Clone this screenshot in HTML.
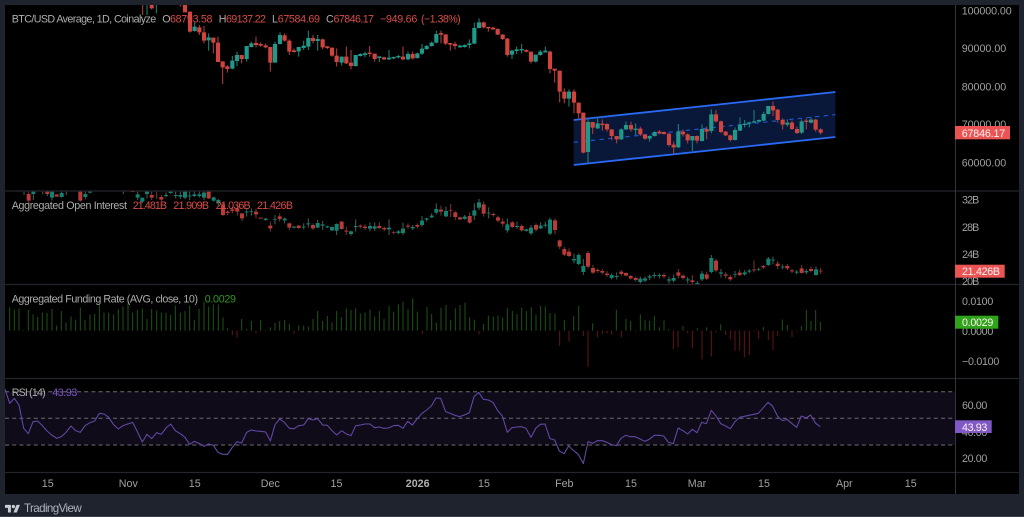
<!DOCTYPE html>
<html><head><meta charset="utf-8"><title>BTC/USD Chart</title>
<style>
html,body{margin:0;padding:0;background:#1e232e;width:1024px;height:517px;overflow:hidden}
svg{display:block;filter:blur(.25px)}
text{font-family:"Liberation Sans",sans-serif;font-size:10.7px;fill:#a0a0a0}
.t{fill:#adadad}.r{fill:#d94c48}.g{fill:#2f9a1e}.p{fill:#7e58c4}.w{fill:#fff2f2}
.rb{stroke:#d0443f;stroke-width:12.5;fill:none}.rw{stroke:#b23c3a;stroke-width:3.2;fill:none}
.gb{stroke:#20988a;stroke-width:12.5;fill:none}.gw{stroke:#1a8275;stroke-width:3.2;fill:none}
.orb{stroke:#b83b38;stroke-width:12;fill:none}.orw{stroke:#733331;stroke-width:3.2;fill:none}
.ogb{stroke:#14806f;stroke-width:12;fill:none}.ogw{stroke:#3a5f56;stroke-width:3.2;fill:none}
.fg{stroke:#1e5513;stroke-width:3;fill:none}.fr{stroke:#661416;stroke-width:3;fill:none}
.rsi{fill:none;stroke:#6548a6;stroke-width:3.2;stroke-linejoin:round}
</style></head><body>
<svg width="1024" height="517" viewBox="0 0 1024 517" xmlns="http://www.w3.org/2000/svg">
<rect width="1024" height="517" fill="#1e232e"/>
<rect x="5" y="5" width="1014" height="489" fill="#000"/>

<!-- channel -->
<g transform="translate(560 80) scale(.33333)">
<polygon points="41,120 826,36 826,171 41,255" fill="#091738"/>
<path d="M41 187L826 104" stroke="#1f55d4" stroke-width="3.5" stroke-dasharray="13 13" fill="none"/>
<path d="M41 120L826 36M41 255L826 171" stroke="#2a6af5" stroke-width="5.5" fill="none"/>
</g>

<!-- main candles -->
<g transform="scale(.33333)">
<path class="rw" d="M428 15V45M455 15V28M541 15V20M570 35V98M598 75V105M612 78V130M640 113V160M654 110V186M668 184V252M682 195V218M725 165V190M768 110V142M782 128V140M797 130V145M811 141V215M854 100V125M868 118V165M882 145V158M939 105V130M968 115V148M982 138V147M996 143V170M1010 145V200"/>
<path class="rb" d="M455 15V25M555 15V37M570 35V95M598 82V97M612 97V122M640 113V128M654 128V186M668 184V202M682 199V207M725 165V177M768 129V135M782 132V137M797 136V142M811 141V188M854 106V122M868 122V155M882 151V156M939 114V123M968 118V142M982 139V144M996 143V167M1010 167V186"/>
<path class="gw" d="M441 15V45M469 15V40M584 68V95M626 100V152M697 168V208M711 155V198M740 138V185M754 125V142M825 125V188M840 97V133M896 141V170M911 122V150M925 92V150M953 105V152"/>
<path class="gb" d="M584 80V93M626 112V121M697 182V206M711 165V183M740 138V177M754 130V141M825 132V188M840 105V132M896 141V154M911 137V144M925 114V140M953 117V123"/>
</g>
<g transform="translate(340 0) scale(.33333)">
<path class="rw" d="M19 140V192M33 150V208M89 138V170M104 161V185M132 170V180M189 140V180M218 155V178M303 92V130M317 103V135M331 130V152M345 125V148M431 65V85M445 80V95M459 80V90M473 85V105M488 102V120M502 114V170M559 148V157M573 155V190M630 152V220M644 207V248M659 212V307M673 265V310M702 268V340M716 308V355M730 338V460M758 366V402M787 358V392M801 370V395M815 388V420M830 408V430M873 365V395M901 380V408M915 403V420M958 390V403M972 394V404M987 401V440M1001 425V460"/>
<path class="rb" d="M19 170V190M33 188V198M89 158V162M104 161V177M132 172V178M189 170V178M218 162V175M303 99V104M317 103V131M331 129V134M345 132V138M431 67V82M445 81V85M459 83V88M473 87V104M488 104V117M502 116V165M559 150V155M573 155V185M630 155V207M644 206V212M659 212V275M673 275V296M702 275V308M716 308V340M730 338V458M758 366V383M787 371V375M801 372V388M815 388V408M830 408V418M873 375V388M901 386V403M915 403V416M958 395V400M972 396V402M987 401V435M1001 434V442"/>
<path class="gw" d="M5 170V197M47 165V200M61 160V170M75 155V172M118 170V186M147 150V180M161 170V177M175 165V175M204 155V180M232 158V176M246 132V165M260 135V150M275 125V140M289 92V130M360 134V143M374 133V143M388 118V145M403 68V132M417 55V85M516 150V177M530 140V162M545 132V160M587 164V187M601 150V167M616 140V158M687 268V320M744 355V490M773 350V387M844 385V420M858 365V390M887 370V405M929 406V425M944 394V410M1015 372V444"/>
<path class="gb" d="M5 170V188M47 165V198M61 162V168M75 160V165M118 169V174M147 173V178M161 171V175M175 168V172M204 162V178M232 160V174M246 146V161M260 138V147M275 128V138M289 102V128M360 137V142M374 135V141M388 130V135M403 84V131M417 67V84M516 152V164M530 148V153M545 147V151M587 164V185M601 155V165M616 152V157M687 275V296M744 366V456M773 370V385M844 388V418M858 375V388M887 386V390M929 408V416M944 396V408M1015 395V442"/>
</g>
<g transform="translate(560 80) scale(.33333)">
<path class="rw" d="M369 148V170M383 160V190M411 166V190M440 140V178M468 90V128M483 122V160M497 153V168M511 164V185M639 65V108M653 87V128M668 115V148M696 122V150M711 140V162M739 115V148M767 117V155M782 145V163"/>
<path class="rb" d="M369 155V163M383 163V181M411 168V182M440 147V155M468 103V124M483 124V156M497 155V166M511 166V180M639 78V91M653 89V120M668 120V134M696 128V147M711 147V159M739 122V126M767 119V149M782 148V158"/>
<path class="gw" d="M397 168V213M426 133V184M454 88V160M525 142V182M540 112V153M554 120V142M568 125V142M582 90V129M597 118V127M611 95V123M625 78V103M682 118V140M725 118V162M753 112V130"/>
<path class="gb" d="M397 168V181M426 147V183M454 103V153M525 150V180M540 134V152M554 131V135M568 127V131M582 124V128M597 120V125M611 102V122M625 78V102M682 128V134M725 124V158M753 119V128"/>
</g>

<!-- open interest candles -->
<g transform="translate(0 185) scale(.33333)">
<path class="ogw" d="M72 20V30M100 20V45M128 20V28M142 20V33M156 20V47M185 20V38M199 20V30M256 20V43M270 20V25M370 20V27M413 20V45M427 38V55M441 20V40M498 22V38M512 20V26M527 20V40M541 20V42M555 20V42M569 20V45M583 20V36M598 20V38M612 20V45M641 35V50M655 42V65M740 70V95M754 70V92M797 99V107M825 90V118M854 98V115M882 123V130M911 115V133M925 100V128M953 105V130M968 108V135M982 122V129M996 124V138M1010 115V150"/>
<path class="orw" d="M86 20V55M241 20V50M455 20V45M470 20V42M484 30V48M626 20V42M669 52V93M683 76V90M697 65V85M712 60V92M726 85V108M768 70V100M811 110V140M839 85V110M868 113V136M896 120V131M939 115V135"/>
<path class="orb" d="M86 27V47M142 20V27M170 28V35M241 20V47M398 19V21M455 30V38M484 36V44M626 20V40M669 58V90M683 80V84M697 73V78M712 70V80M726 85V100M768 80V88M782 98V101M811 122V130M839 94V102M868 115V128M896 122V129M939 120V130"/>
<path class="ogb" d="M100 20V27M156 20V38M185 24V36M256 27V36M270 20V23M413 28V38M427 38V50M441 20V27M498 30V33M512 20V24M527 30V33M541 30V35M555 20V38M569 32V34M583 28V33M598 28V33M612 23V38M641 37V47M655 45V55M740 80V82M754 79V81M797 101V105M825 102V104M854 101V106M882 125V128M911 125V127M925 115V118M953 114V128M968 118V122M982 124V127M996 126V136M1010 117V137"/>
</g>
<g transform="translate(340 185) scale(.33333)">
<path class="ogw" d="M33 137V152M47 103V140M90 112V138M104 112V138M147 103V150M175 135V148M189 113V150M218 120V135M246 93V125M260 98V110M275 85V99M289 55V88M318 65V96M374 90V104M403 55V105M417 42V75M446 67V100M502 100V143M531 110V132M559 131V140M573 120V150M602 112V132M616 110V128M630 98V150M702 206V235M716 205V240M730 222V270M815 265V283M830 262V283M901 275V295M915 275V292M929 268V285M943 262V280M958 265V280M987 275V295M1001 268V292"/>
<path class="orw" d="M5 108V134M19 125V150M61 118V130M75 118V135M118 112V132M133 125V138M161 138V148M204 115V132M232 115V130M303 62V92M332 57V96M346 78V105M360 95V105M389 82V116M431 50V95M460 83V95M474 92V112M488 100V125M517 108V130M545 118V140M588 115V140M645 100V148M659 164V192M673 186V213M687 190V216M744 198V250M759 240V267M773 250V263M787 252V268M801 258V276M844 255V272M858 262V274M872 270V283M887 275V290M972 264V280M1015 252V280"/>
<path class="orb" d="M5 110V132M19 137V140M61 122V125M75 125V129M118 123V129M133 129V133M161 141V143M204 122V125M232 120V125M303 74V80M332 76V78M346 82V96M360 97V103M389 93V113M431 58V86M460 87V90M474 97V107M488 110V116M517 112V126M545 123V136M588 120V134M645 106V135M659 166V185M673 192V209M687 200V213M744 204V245M759 249V263M773 255V258M787 258V263M801 266V270M844 260V267M858 264V272M872 273V280M887 279V285M972 270V274M1015 262V272"/>
<path class="ogb" d="M33 139V147M47 123V126M90 123V131M104 124V131M147 128V133M175 139V144M189 131V144M218 126V130M246 107V120M260 100V104M275 92V97M289 72V83M318 78V94M374 95V102M403 76V92M417 52V68M446 83V85M502 118V136M531 123V126M559 133V138M573 128V145M602 122V130M616 119V122M630 104V146M702 222V226M716 210V237M730 243V261M815 270V279M830 273V276M901 281V291M915 280V287M929 274V278M943 270V273M958 270V273M987 283V287M1001 279V287"/>
</g>
<g transform="translate(680 185) scale(.33333)">
<path class="ogw" d="M23 276V295M52 288V300M66 258V288M94 210V265M123 252V278M165 258V278M194 255V272M208 252V265M236 248V258M265 216V243M279 215V238M308 238V253M350 255V268M379 252V267M408 245V272"/>
<path class="orw" d="M9 268V284M37 270V298M80 260V285M108 222V262M137 262V280M151 270V288M179 254V273M222 226V262M250 240V252M293 228V252M322 237V255M336 252V264M365 240V266M393 245V262M422 249V267"/>
<path class="orb" d="M9 272V279M37 286V291M80 268V281M108 227V256M137 268V272M151 276V283M179 263V270M222 254V256M250 243V247M293 236V243M322 243V250M336 256V259M365 250V264M393 252V258M422 257V259"/>
<path class="ogb" d="M23 283V286M52 294V297M66 266V283M94 219V261M123 262V266M165 268V270M194 262V268M208 257V260M236 252V254M265 221V240M279 224V226M308 245V247M350 260V263M379 258V262M408 253V270"/>
</g>

<!-- funding -->
<g transform="translate(0 285) scale(.33333)">
<path class="fg" d="M29 68V137M43 74V137M57 70V137M71 135V137M85 75V137M99 88V137M113 96V137M127 82V137M141 84V137M156 72V137M170 122V137M184 78V137M198 113V137M213 94V137M227 104V137M241 68V137M255 105V137M270 88V137M284 87V137M298 60V137M312 83V137M326 83V137M341 88V137M355 73V137M369 65V137M384 55V137M398 83V137M412 75V137M427 70V137M441 102V137M455 72V137M470 77V137M484 83V137M498 83V137M512 90V137M526 62V137M541 83V137M555 78V137M569 62V137M583 105V137M597 72V137M612 50V137M626 65V137M640 58V137M655 58V137M669 98V137M683 130V137M725 102V137M740 132V137M754 108V137M782 105V137M797 135V137M811 127V137M825 114V137M839 108V137M854 105V137M868 116V137M896 122V137M911 122V137M925 125V137M939 102V137M953 78V137M968 108V137M982 93V137M996 112V137M1010 78V137"/>
<path class="fr" d="M697 137V150M711 137V158M768 137V144M882 137V147"/>
</g>
<g transform="translate(340 285) scale(.33333)">
<path class="fg" d="M4 96V137M19 70V137M33 75V137M47 70V137M61 86V137M75 83V137M90 74V137M104 95V137M118 78V137M132 102V137M147 63V137M161 80V137M175 58V137M189 50V137M204 72V137M218 40V137M232 80V137M261 66V137M275 87V137M289 113V137M303 68V137M318 60V137M332 105V137M346 70V137M360 60V137M375 53V137M389 97V137M403 104V137M431 117V137M445 92V137M460 95V137M474 92V137M488 98V137M502 69V137M517 78V137M531 87V137M545 68V137M559 78V137M574 67V137M588 90V137M602 63V137M616 64V137M630 84V137M645 86V137M673 105V137M701 93V137M716 63V137M758 115V137M829 74V137M858 102V137M872 108V137M901 88V137M915 106V137M929 108V137M943 93V137M958 127V137M972 106V137M986 133V137"/>
<path class="fr" d="M247 137V148M417 137V148M659 137V183M687 137V170M730 137V153M744 137V245M772 137V158M787 137V147M801 137V145M815 137V150M844 137V157M886 137V140M1000 137V193M1014 137V187"/>
</g>
<g transform="translate(680 185) scale(.33333)">
<path class="fg" d="M9 423V437M52 430V437M80 427V437M122 418V437M250 426V437M307 404V437M322 420V437M364 423V437M379 375V437M393 408V437M407 375V437M421 411V437"/>
<path class="fr" d="M23 437V445M37 437V490M66 437V523M94 437V515M108 437V442M137 437V450M151 437V463M165 437V497M179 437V497M193 437V517M208 437V510M222 437V440M236 437V462M265 437V465M279 437V495M293 437V453M336 437V456M350 437V440"/>
</g>

<!-- RSI -->
<rect x="5" y="391.7" width="950" height="53.3" fill="#0f0b19"/>
<path d="M5 391.7H955M5 418.3H955M5 445H955" stroke="#6f6b74" stroke-width="1" stroke-dasharray="4 3.2" fill="none"/>
<g transform="translate(0 375) scale(.33333)"><polyline class="rsi" points="15,42 29,85 43,70 57,90 71,160 85,176 99,140 113,138 127,152 141,168 155,180 170,190 184,185 198,172 213,153 227,167 241,172 255,152 270,143 284,138 298,115 312,117 326,127 340,148 355,162 369,152 383,147 398,142 412,170 427,201 441,178 455,191 470,173 484,178 498,159 512,147 526,167 541,176 555,187 569,208 583,199 597,205 612,214 626,207 640,211 654,232 668,238 683,238 697,217 711,200 725,204 740,172 754,165 768,168 782,169 797,171 811,198 825,149 839,132 853,142 868,160 882,161 896,152 911,150 925,131 939,135 953,131 968,150 982,151 996,167 1010,180 1025,167"/></g>
<g transform="translate(340 375) scale(.33333)"><polyline class="rsi" points="5,167 19,177 33,182 47,152 61,150 75,147 90,147 104,158 118,156 132,160 146,159 160,152 175,151 189,160 203,139 217,150 231,132 246,115 260,105 274,93 288,69 302,70 317,110 331,115 345,121 359,125 373,120 388,113 402,65 416,52 430,73 445,75 459,82 473,107 487,123 502,172 516,158 530,156 544,155 558,160 573,187 587,160 601,148 615,147 630,191 644,195 658,228 672,236 686,213 700,226 715,238 730,266 744,200 758,205 772,197 787,197 801,202 815,209 829,212 843,190 857,181 871,185 885,185 900,192 914,199 928,193 943,181 957,181 971,183 985,202 1000,206 1014,160 1020,160"/></g>
<g transform="translate(680 375) scale(.33333)"><polyline class="rsi" points="-5,160 9,167 23,177 37,163 51,173 65,142 79,146 94,106 108,123 122,146 137,153 151,161 165,140 179,127 193,124 207,121 221,118 235,115 250,98 264,82 278,94 293,124 307,137 321,133 335,145 350,157 364,123 378,129 392,120 407,145 421,155"/></g>

<!-- separators -->
<path d="M5 191H1019M5 284.5H1019M5 378.5H1019M5 472.5H1019" stroke="#25262c" stroke-width="1.2" fill="none"/>
<path d="M955.5 5V494" stroke="#34353a" stroke-width="1" fill="none"/>

<!-- top and edge mask -->
<rect width="1024" height="5" fill="#1e232e"/>
<rect width="5" height="517" fill="#1e232e"/>
<rect x="1019" width="5" height="517" fill="#1e232e"/>
<rect y="516" width="1024" height="1" fill="#3a3e48"/>

<!-- legends -->
<text class="t" x="11.7" y="22.5" textLength="144.5" lengthAdjust="spacing">BTC/USD Average, 1D, Coinalyze</text>
<text class="t" x="162.3" y="22.5">O</text><text class="r" x="170" y="22.5" textLength="42.5" lengthAdjust="spacing">68793.58</text>
<text class="t" x="218.7" y="22.5">H</text><text class="r" x="226" y="22.5" textLength="40" lengthAdjust="spacing">69137.22</text>
<text class="t" x="272" y="22.5">L</text><text class="r" x="277.7" y="22.5" textLength="42.3" lengthAdjust="spacing">67584.69</text>
<text class="t" x="326" y="22.5">C</text><text class="r" x="333.5" y="22.5" textLength="40.5" lengthAdjust="spacing">67846.17</text>
<text class="r" x="380" y="22.5" textLength="37.3" lengthAdjust="spacing">−949.66</text>
<text class="r" x="421" y="22.5" textLength="39.7" lengthAdjust="spacing">(−1.38%)</text>

<text class="t" x="11.7" y="209" textLength="115.3" lengthAdjust="spacing">Aggregated Open Interest</text>
<text class="r" x="132.7" y="209" textLength="34.3" lengthAdjust="spacing">21.481B</text>
<text class="r" x="173.3" y="209" textLength="35.7" lengthAdjust="spacing">21.909B</text>
<text class="r" x="215.7" y="209" textLength="35" lengthAdjust="spacing">21.036B</text>
<text class="r" x="257" y="209" textLength="36" lengthAdjust="spacing">21.426B</text>

<text class="t" x="11.7" y="302.5" textLength="186.3" lengthAdjust="spacing">Aggregated Funding Rate (AVG, close, 10)</text>
<text class="g" x="204.7" y="302.5" textLength="31.3" lengthAdjust="spacing">0.0029</text>

<text class="t" x="11.7" y="396" textLength="34" lengthAdjust="spacing">RSI (14)</text>
<text class="p" x="52.3" y="396" textLength="25" lengthAdjust="spacing">43.93</text>

<!-- price axes -->
<text x="961.7" y="14.6" textLength="50" lengthAdjust="spacing">100000.00</text>
<text x="961.7" y="52.2" textLength="44.5" lengthAdjust="spacing">90000.00</text>
<text x="961.7" y="90.6" textLength="44.5" lengthAdjust="spacing">80000.00</text>
<text x="961.7" y="128" textLength="44.5" lengthAdjust="spacing">70000.00</text>
<text x="961.7" y="166.6" textLength="44.5" lengthAdjust="spacing">60000.00</text>
<rect x="955" y="126" width="55" height="13.3" fill="#ec5353"/>
<text class="w" x="961.7" y="136.9" textLength="43.5" lengthAdjust="spacing">67846.17</text>

<text x="962" y="203.6" textLength="17.3" lengthAdjust="spacing">32B</text>
<text x="962" y="230.9" textLength="17.3" lengthAdjust="spacing">28B</text>
<text x="962" y="258.2" textLength="17.3" lengthAdjust="spacing">24B</text>
<text x="962" y="285.2" textLength="17.3" lengthAdjust="spacing">20B</text>
<rect x="955" y="264.7" width="49.7" height="13" fill="#ec5353"/>
<text class="w" x="962" y="275.2" textLength="38" lengthAdjust="spacing">21.426B</text>

<text x="962" y="304.9" textLength="31.3" lengthAdjust="spacing">0.0100</text>
<text x="962" y="334.9" textLength="31.3" lengthAdjust="spacing">0.0000</text>
<text x="962" y="364.9" textLength="37.3" lengthAdjust="spacing">−0.0100</text>
<rect x="955" y="315.7" width="43.3" height="13" fill="#2fa31a"/>
<text class="w" x="962" y="326.2" textLength="31.3" lengthAdjust="spacing">0.0029</text>

<text x="962" y="409.2" textLength="25.3" lengthAdjust="spacing">60.00</text>
<text x="962" y="435.9" textLength="25.3" lengthAdjust="spacing">40.00</text>
<text x="962" y="462.2" textLength="25.3" lengthAdjust="spacing">20.00</text>
<rect x="955" y="420.3" width="36.7" height="12.7" fill="#8059c6"/>
<text class="w" x="962" y="430.9" textLength="25.3" lengthAdjust="spacing">43.93</text>

<!-- time axis -->
<g text-anchor="middle">
<text x="47.7" y="487">15</text><text x="128.3" y="487">Nov</text><text x="194.7" y="487">15</text><text x="270.3" y="487">Dec</text><text x="336.5" y="487">15</text>
<text x="417.7" y="487" font-weight="700" style="fill:#b0b0b0">2026</text>
<text x="484" y="487">15</text><text x="564.3" y="487">Feb</text><text x="631" y="487">15</text><text x="697" y="487">Mar</text><text x="764" y="487">15</text><text x="844.3" y="487">Apr</text><text x="910.7" y="487">15</text>
</g>

<!-- TradingView logo -->
<g transform="translate(5 503.2) scale(.42)" fill="#c9ccd3">
<path d="M14 22H7V11H0V4h14v18zM28 22h-8l7.5-18h8L28 22z"/><circle cx="20" cy="8" r="4"/>
</g>
<text x="24" y="511.8" textLength="57.7" lengthAdjust="spacing" style="font-size:11.6px;fill:#aeb2ba">TradingView</text>
</svg>
</body></html>
